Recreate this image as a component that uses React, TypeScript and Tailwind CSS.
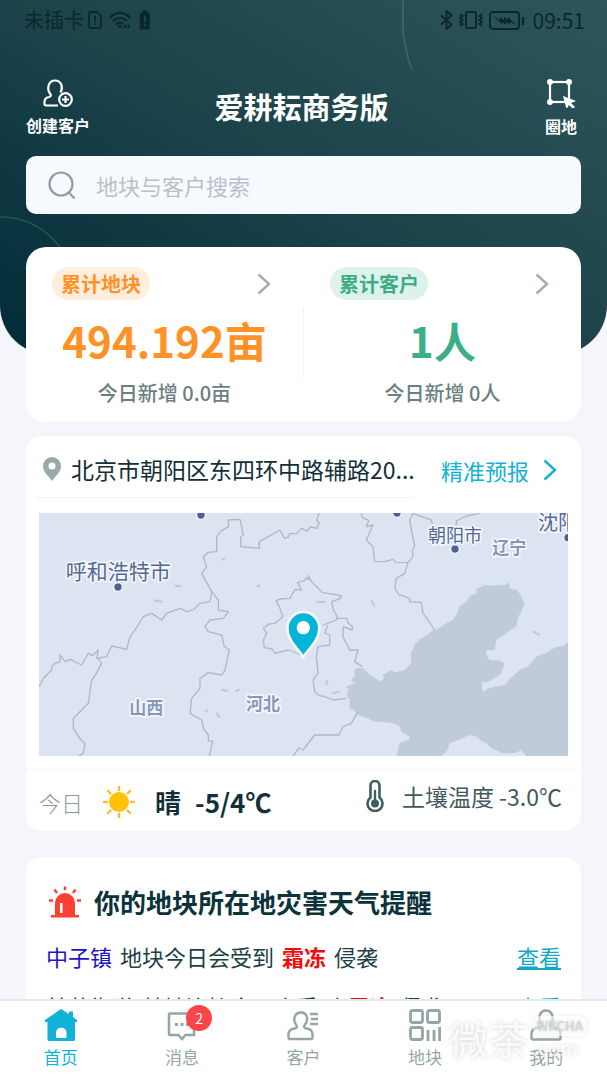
import type { ReactNode } from "react";
import clsx from "clsx";

type Stat = {
  label: string;
  value: string;
  today: string;
  pill: string;
  color: string;
};

type Alert = {
  place: string;
  text: string;
  hazard: string;
};

type Tab = {
  label: string;
  icon: ReactNode;
  active?: boolean;
  badge?: number;
};

const stats: Stat[] = [
  {
    label: "累计地块",
    value: "494.192亩",
    today: "今日新增 0.0亩",
    pill: "bg-[#ffeedd] text-[#ff9226]",
    color: "text-[#ff9226]",
  },
  {
    label: "累计客户",
    value: "1人",
    today: "今日新增 0人",
    pill: "bg-[#dcf2ea] text-[#3bae86]",
    color: "text-[#3bae86]",
  },
];

const alerts: Alert[] = [
  { place: "中子镇", text: "地块今日会受到", hazard: "霜冻" },
  { place: "林草街道", text: "林地连接今日会受到", hazard: "霜冻" },
];

const borders = [
  "0,521 14,495 38,471 38,461 50,450 63,446 63,426 78,446 93,439 128,456 148,421 160,428 178,411 173,436 203,431 218,399 263,409 273,371 288,351 313,311 338,301 368,321 383,301 423,286 443,296 463,290 483,271 513,266 518,236 488,181 503,161 493,131 508,118 533,116 533,71 545,55 568,41 568,21 603,19 613,66 605,72 605,101 661,106 661,86 723,51 736,76 748,72 752,62 773,62 788,46 803,54 815,42 833,46 841,30 833,22 841,0",
  "178,436 188,451 170,485 158,501 148,571 103,616 103,646 125,680 138,691 133,721 118,729",
  "518,236 538,261 538,291 568,296 553,316 513,321 498,341 508,356 548,366 556,400 571,411 558,471 548,486 508,479 483,496 483,526 458,556 453,601 488,621 495,650 508,666 508,682 521,686 511,729",
  "723,286 711,263 725,258 753,256 768,229 788,231 776,208 798,203 800,194 808,200 808,188 818,206 851,239 885,244 908,249 900,258 878,266 883,291 895,311 893,321 853,336",
  "723,286 731,311 708,331 690,333 673,346 683,360 673,381 676,404 700,408 708,421 748,411 788,426",
  "893,316 923,316 928,330 940,341 940,351 913,341 912,371 932,411 957,411 947,446 970,461",
  "867,336 857,360 872,366 872,396 837,401 832,431 837,481 822,501 827,536 842,548 855,550 882,561 922,556",
  "957,596 937,631 912,641 900,666 827,666 792,711 780,705 770,718 763,729",
  "967,1 970,14 990,22 982,41 1002,36 990,62 982,81 1002,101 1007,146 1040,145 1062,139 1070,148 1107,149 1122,131 1120,115 1127,96 1117,51 1112,21 1122,1",
  "1107,149 1097,181 1072,196 1067,226 1080,245 1112,256 1112,266 1147,268 1152,301 1165,318 1187,351",
  "1122,1 1140,8 1177,21 1182,41",
  "1322,1 1282,9 1252,24 1252,36",
];

const specks = [
  "549,140 556,137",
  "655,220 662,218",
  "345,262 368,266",
  "408,218 424,220",
  "835,266 858,268",
  "998,264 1006,278",
  "550,530 565,534",
  "592,534 600,530",
  "500,595 506,590",
  "534,602 540,612",
  "862,514 866,502",
  "882,540 900,536",
  "1484,356 1500,365",
];

const dots = [
  [237, 222],
  [486, 6],
  [1074, 0],
  [1248, 108],
  [1587, 74],
];

function ChevronRight({ className }: { className?: string }) {
  return (
    <svg viewBox="0 0 14 22" className={clsx("h-[22px] w-3.5 shrink-0", className)} aria-hidden>
      <path d="M1.5 1.5 12 11 1.5 20.5" fill="none" stroke="currentColor" strokeWidth="2.4" />
    </svg>
  );
}

function StatusBar() {
  return (
    <div className="flex h-10 items-center justify-between pr-[22px] pl-6 text-[#0b272e]">
      <div className="flex items-center">
        <span className="text-[20px] leading-10">未插卡</span>
        <svg viewBox="0 0 14 18" className="ml-1 h-[18px] w-3.5" aria-hidden>
          <path d="M1 3.5A2 2 0 0 1 3 1h6l4 4v10a2 2 0 0 1-2 2H3a2 2 0 0 1-2-2z" fill="none" stroke="currentColor" strokeWidth="1.8" />
          <path d="M7 5v5.5M7 12v2" stroke="currentColor" strokeWidth="2" />
        </svg>
        <svg viewBox="0 0 22 18" className="ml-[7px] h-[18px] w-[22px]" aria-hidden>
          <g fill="none" stroke="currentColor" strokeWidth="2.2">
            <path d="M1 6.5C7 .3 15 .3 21 6.5" />
            <path d="M4 10c4.3-4 9.700-4 14 0" />
            <path d="M7 13.300c2.400-2.200 5-2.200 7 0" />
          </g>
          <circle cx="11" cy="15.5" r="1.8" fill="currentColor" />
          <path d="m17 13-3 2.500 3 2.500zM18.500 13l3 2.500-3 2.500z" fill="currentColor" />
        </svg>
        <svg viewBox="0 0 12 20" className="ml-2 h-5 w-3" aria-hidden>
          <path d="M3.500.5h5V3h2.300v16.500H.7V3h2.800z" fill="currentColor" />
          <path d="M6 6v6.500M6 14.300v2" stroke="#1d4a4c" strokeWidth="1.6" />
        </svg>
      </div>
      <div className="flex items-center">
        <svg viewBox="0 0 13 20" className="h-5 w-[13px]" aria-hidden>
          <path d="m1 5.500 10.500 9L6.500 19V1l5 4.500L1 14.500" fill="none" stroke="currentColor" strokeWidth="1.9" />
        </svg>
        <svg viewBox="0 0 24 18" className="ml-1.5 h-[18px] w-6" aria-hidden>
          <g fill="none" stroke="currentColor" strokeWidth="2">
            <rect x="7" y="1" width="10" height="16" rx="1.5" />
            <path d="m1 3 2.500 2L1 7l2.500 2L1 11l2.500 2L1 15M23 3l-2.500 2L23 7l-2.500 2 2.500 2-2.500 2 2.500 2" />
          </g>
        </svg>
        <svg viewBox="0 0 36 19" className="ml-1.5 h-[19px] w-9" aria-hidden>
          <rect x="1" y="1" width="29" height="17" rx="3" fill="none" stroke="currentColor" strokeWidth="1.9" />
          <path d="M34 6v8" stroke="currentColor" strokeWidth="2.2" />
          <path d="m4 4 7.500 5.500V5.500L15 9V5.500L18.500 9V6L28 14l-7-3v3l-4-3v3l-4-3v2.500z" fill="currentColor" />
        </svg>
        <span className="ml-2 text-[21px] leading-10">09:51</span>
      </div>
    </div>
  );
}

function HeaderButton({ label, children }: { label: string; children: ReactNode }) {
  return (
    <button type="button" className="flex flex-col items-center gap-1.5 text-white">
      {children}
      <span className="text-[16px] leading-6 font-bold">{label}</span>
    </button>
  );
}

function Header() {
  return (
    <header className="relative overflow-hidden rounded-b-[50px] bg-linear-to-bl from-[#2d565b] via-[#1c434a] via-50% to-[#002b38] pb-[141px]">
      <svg viewBox="0 0 607 355" className="absolute inset-0 h-full w-full" fill="none" preserveAspectRatio="xMinYMin slice" aria-hidden>
        <circle cx="0" cy="292" r="75" stroke="#3d6870" strokeOpacity="0.6" strokeWidth="1.5" />
        <path d="M403 0v32q3 22 9 38" stroke="#4b787b" strokeOpacity="0.5" strokeWidth="2" />
      </svg>
      <div className="relative">
        <StatusBar />
        <div className="grid grid-cols-[1fr_auto_1fr] items-center pt-9 pr-[30px] pb-4 pl-[26px]">
          <div className="flex justify-start">
            <HeaderButton label="创建客户">
              <svg viewBox="0 0 30 28" className="h-7 w-[30px]" fill="none" stroke="currentColor" strokeWidth="2.2" aria-hidden>
                <path d="M15 26.500H3a1.500 1.500 0 0 1-1.500-1.500v-2c0-3 1.500-4.500 4.500-5 2-.4 2.500-1.800 1-3.500C3.500 9.500 5.500 1.500 12 1.500s8.500 7 5.500 12" />
                <circle cx="22.5" cy="20.5" r="6.3" />
                <path d="M22.500 17v7M19 20.500h7" />
              </svg>
            </HeaderButton>
          </div>
          <h1 className="pb-1 text-[29px] leading-[60px] font-bold text-white">爱耕耘商务版</h1>
          <div className="flex justify-end">
            <HeaderButton label="圈地">
              <svg viewBox="0 0 30 30" className="h-[30px] w-[30px]" aria-hidden>
                <rect x="4" y="4" width="19" height="20" fill="none" stroke="currentColor" strokeWidth="2.2" />
                <g fill="currentColor">
                  <circle cx="4" cy="4" r="3" />
                  <circle cx="23" cy="4" r="3" />
                  <circle cx="4" cy="24" r="3" />
                </g>
                <path d="m17 18 13 5-5 2 4 4-2 2-4-4-2.500 4z" fill="currentColor" />
              </svg>
            </HeaderButton>
          </div>
        </div>
        <div className="mx-[26px] flex h-[58px] items-center rounded-[10px] bg-[#f6f9fd] pl-[22px]">
          <svg viewBox="0 0 28 28" className="h-7 w-7 shrink-0 text-[#8f9fa3]" fill="none" stroke="currentColor" strokeWidth="2.2" aria-hidden>
            <circle cx="13" cy="13" r="11.5" />
            <path d="m20.500 21 6 6.500" />
          </svg>
          <input
            type="text"
            aria-label="地块与客户搜索"
            placeholder="地块与客户搜索"
            className="ml-5 min-w-0 flex-1 bg-transparent text-[22px] leading-8 outline-none placeholder:text-[#b9c1c7]"
          />
        </div>
      </div>
    </header>
  );
}

function StatColumn({ stat }: { stat: Stat }) {
  return (
    <a href="#" className="block flex-1 text-center">
      <div className="flex h-[33px] items-center justify-between pr-8 pl-[26px]">
        <span className={clsx("rounded-full px-[9px] text-[20px] leading-[33px] font-bold", stat.pill)}>{stat.label}</span>
        <ChevronRight className="text-[#a3acae]" />
      </div>
      <p className={clsx("mt-2.5 text-[42px] leading-[60px] font-bold", stat.color)}>{stat.value}</p>
      <p className="mt-2 text-[20px] leading-[30px] font-medium text-[#6a7f80]">{stat.today}</p>
    </a>
  );
}

function WeatherMap() {
  return (
    <svg
      viewBox="0 0 1587 729"
      preserveAspectRatio="xMidYMid slice"
      className="block h-[243px] w-full bg-[#dce4f1]"
      role="img"
      aria-label="地图"
    >
      <path
        d="M1192 351 1222 331 1240 322 1257 296 1262 280 1282 266 1292 250 1312 240 1312 228 1337 216 1360 218 1402 216 1408 206 1412 226 1435 232 1447 250 1456 275 1445 300 1437 311 1432 340 1407 356 1372 381 1367 411 1342 412 1342 426 1352 441 1385 443 1397 452 1387 481 1372 493 1350 505 1327 509 1332 536 1345 527 1367 521 1397 516 1410 500 1442 471 1465 462 1492 431 1520 420 1552 401 1570 400 1587 386V729H1462L1447 711 1430 720 1392 721 1357 706 1345 692 1322 681 1315 672 1292 666 1260 680 1232 691 1225 712 1207 729H1072L1082 691 1095 685 1112 681 1110 670 1087 656 1080 638 1062 631 1047 628 1007 626 985 615 957 606 945 592 932 586 932 560 922 546 930 530 920 521 947 511 935 500 947 491 947 471 957 464 972 466 990 483 1002 491 1027 506 1035 495 1030 485 1042 481 1055 472 1070 478 1097 471 1117 450 1115 420 1127 396 1140 380 1165 365 1182 351Z"
        fill="#bfcbd9"
      />
      <g fill="none" stroke="#b0b8c7" strokeWidth="4" strokeLinejoin="round">
        {borders.map((points) => (
          <polyline key={points} points={points} />
        ))}
      </g>
      <g fill="none" stroke="#bfc8d6" strokeWidth="6" strokeLinecap="round">
        {specks.map((points) => (
          <polyline key={points} points={points} />
        ))}
      </g>
      <g fill="#4d6193" stroke="#f3f7fc" strokeWidth="4">
        {dots.map(([x, y]) => (
          <circle key={x} cx={x} cy={y} r="13" />
        ))}
      </g>
      <g fill="#556895" stroke="#f3f7fc" strokeWidth="10" strokeLinejoin="round" paintOrder="stroke">
        <text x="238" y="198" fontSize="63" textAnchor="middle">
          呼和浩特市
        </text>
        <text x="1248" y="87" fontSize="54" textAnchor="middle">
          朝阳市
        </text>
        <text x="1497" y="50" fontSize="60">
          沈阳
        </text>
        <g fill="#8797ba" fontSize="51" fontWeight="700" textAnchor="middle">
          <text x="1411" y="123">辽宁</text>
          <text x="322" y="603">山西</text>
          <text x="672" y="591">河北</text>
        </g>
      </g>
      <path
        d="M793 432C775 405 745 382 745 345a48 48 0 0 1 96 0c0 37-30 60-48 87z"
        fill="#06b4d8"
        stroke="#f3f9fd"
        strokeWidth="8"
      />
      <circle cx="793" cy="344" r="20" fill="#fff" />
    </svg>
  );
}

function WeatherCard() {
  return (
    <section className="mx-[26px] mt-3.5 rounded-2xl bg-white">
      <div className="flex">
        <div className="ml-2.5 flex h-[62px] min-w-0 flex-1 items-center gap-2.5 border-b border-[#f1f2f5] pt-1 pl-[7px]">
          <svg viewBox="0 0 18 24" className="h-6 w-[18px] shrink-0" aria-hidden>
            <path d="M9 0a9 9 0 0 0-9 9c0 6.500 5 9 9 15 4-6 9-8.500 9-15a9 9 0 0 0-9-9zm0 5.500a3.500 3.500 0 1 1 0 7 3.500 3.500 0 0 1 0-7z" fill="#9aa9ac" />
          </svg>
          <p className="text-[23px] leading-8 whitespace-nowrap text-[#12303a]">北京市朝阳区东四环中路辅路20...</p>
        </div>
        <a href="#" className="flex items-center gap-3.5 pt-1.5 pr-6 pl-[27px] text-[22px] leading-8 text-[#12b2d2]">
          精准预报
          <ChevronRight />
        </a>
      </div>
      <div className="mt-[15px] px-[13px]">
        <WeatherMap />
      </div>
      <div className="mt-[13px] flex h-[62px] items-center justify-between border-t border-[#f4f5f8] pr-[19px] pl-[13px]">
        <div className="flex items-center pt-0.5">
          <span className="text-[22px] leading-8 font-light text-[#8d9798]">今日</span>
          <svg viewBox="0 0 32 32" className="ml-5 h-8 w-8" aria-hidden>
            <circle cx="16" cy="16" r="10" fill="#ffc107" />
            <path
              d="M16 1v3M16 28v3M1 16h3M28 16h3M5 5l2.500 2.500M24.500 24.500 27 27M5 27l2.500-2.500M24.500 7.500 27 5"
              stroke="#f9bd2a"
              strokeWidth="2.4"
              strokeLinecap="round"
            />
          </svg>
          <strong className="ml-5 text-[26px] leading-8 font-bold text-[#12303a]">晴</strong>
          <strong className="ml-3.5 text-[26px] leading-8 font-bold text-[#12303a]">-5/4℃</strong>
        </div>
        <div className="flex items-center pb-2.5">
          <svg viewBox="0 0 18 32" className="h-8 w-[18px]" aria-hidden>
            <path
              d="M4.500 17.500V5.500a4.500 4.500 0 0 1 9 0v12a7.500 7.500 0 1 1-9 0z"
              fill="none"
              stroke="#3d5e62"
              strokeWidth="2.6"
            />
            <path d="M9 11v10" stroke="#3d5e62" strokeWidth="2.4" strokeLinecap="round" />
            <circle cx="9" cy="23.5" r="4" fill="#3d5e62" />
          </svg>
          <span className="ml-[18px] text-[23px] leading-8 text-[#42595d]">土壤温度 -3.0℃</span>
        </div>
      </div>
    </section>
  );
}

function AlertCard() {
  return (
    <section className="mx-[26px] mt-[26px] rounded-2xl bg-white px-5 pt-[25px] pb-6">
      <h2 className="flex items-center gap-[13px] pl-[3px] text-[26px] leading-10 font-bold text-[#0c333b]">
        <svg viewBox="0 0 32 32" className="h-8 w-8" aria-hidden>
          <path
            d="M16 .5V4M5.500 3.500 8 7M26.500 3.500 24 7M0 14.500h4M28 14.500h4"
            stroke="#fb4034"
            strokeWidth="2.4"
          />
          <path d="M6 29V17a10 10 0 0 1 20 0v12h4v2.500H2V29zM11 17v10h2.500V17z" fill="#fb4034" fillRule="evenodd" />
        </svg>
        你的地块所在地灾害天气提醒
      </h2>
      <ul className="mt-[9px] text-[22px] leading-[50px] text-[#1d3f45]">
        {alerts.map((alert) => (
          <li key={alert.place} className="flex justify-between">
            <p className="flex gap-2">
              <span className="text-[#1f14c4]">{alert.place}</span>
              <span>{alert.text}</span>
              <strong className="font-bold text-[#f20d0d]">{alert.hazard}</strong>
              <span>侵袭</span>
            </p>
            <a href="#" className="text-[#12a8c8] underline">
              查看
            </a>
          </li>
        ))}
      </ul>
    </section>
  );
}

const tabs: Tab[] = [
  {
    label: "首页",
    active: true,
    icon: (
      <path
        d="M16 0 24 5V2.500h4V8l4 3v2h-2v17.500a1.500 1.500 0 0 1-1.500 1.500H4a1.500 1.500 0 0 1-1.500-1.500V13H0v-2zM11 29h10.500v-5c0-7-10.500-7-10.500 0z"
        fill="currentColor"
        fillRule="evenodd"
      />
    ),
  },
  {
    label: "消息",
    badge: 2,
    icon: (
      <>
        <path d="M4 4.500h23a1 1 0 0 1 1 1V26H19.500L16 30l-3.500-4H4a1 1 0 0 1-1-1V5.500a1 1 0 0 1 1-1z" fill="none" stroke="currentColor" strokeWidth="2.5" />
        <path d="M9 15.500h3M14.500 15.500h3M20 15.500h3" stroke="currentColor" strokeWidth="3" />
      </>
    ),
  },
  {
    label: "客户",
    icon: (
      <path
        d="M14 3.500c-7 0-8.500 8-4.500 13 1 1.500 0 2.700-2 3-3.500.5-6 2.500-6 6v3c0 1 .5 1.500 1.500 1.500h21c1 0 1.500-.5 1.500-1.500v-3c0-3.500-2.500-5.500-6-6-2-.3-3-1.500-2-3 4-5 3.500-13-3.500-13zM23 5h8M24 10h7M23 15h8"
        fill="none"
        stroke="currentColor"
        strokeWidth="2.4"
      />
    ),
  },
  {
    label: "地块",
    icon: (
      <g fill="none" stroke="currentColor" strokeWidth="2.8">
        <rect x="1.5" y="1.5" width="12" height="12" rx="2" />
        <rect x="18.5" y="1.5" width="12" height="12" rx="2" />
        <rect x="1.5" y="18.5" width="12" height="12" rx="2" />
        <path d="M19 21v11M25 21v11M30.600 18v14" />
      </g>
    ),
  },
  {
    label: "我的",
    icon: (
      <path
        d="M16 1.500c-6.500 0-8.500 8-4.500 13.500 1.200 1.800 0 3-2.500 3.500C4 19 1.500 21.500 1.500 25v4c0 1 .5 1.500 1.500 1.500h26c1 0 1.500-.5 1.500-1.500v-4c0-3.500-2.500-6-7.500-6.500-2.500-.5-3.700-1.700-2.500-3.500 4-5.500 2-13.500-4.500-13.500z"
        fill="none"
        stroke="currentColor"
        strokeWidth="2.4"
      />
    ),
  },
];

function TabBar() {
  return (
    <nav className="relative grid h-[81px] shrink-0 grid-cols-5 border-t-2 border-[#e2eaea] bg-white">
      {tabs.map((tab) => (
        <a
          key={tab.label}
          href="#"
          className={clsx("flex flex-col items-center pt-2", tab.active ? "text-[#12b2d8]" : "text-[#96a5a6]")}
        >
          <span className="relative">
            <svg viewBox="0 0 32 32" className="h-8 w-8" aria-hidden>
              {tab.icon}
            </svg>
            {tab.badge && (
              <span className="absolute -top-1 left-5 h-[26px] w-[26px] rounded-full bg-[#fb4548] text-center text-[14px] leading-[26px] text-white">
                {tab.badge}
              </span>
            )}
          </span>
          <span className="mt-1 text-[17px] leading-6">{tab.label}</span>
        </a>
      ))}
      <div className="pointer-events-none absolute right-5 bottom-[18px] flex h-12 items-center text-white/80 text-shadow-[0_0_4px_rgb(0_0_0/0.18)]">
        <span className="text-[40px] leading-[48px]">微茶</span>
        <span className="ml-1 flex flex-col">
          <span className="rounded-lg bg-white/60 px-1 text-[13px] leading-5 font-bold text-[#d3d8d9] shadow-[0_0_4px_rgb(0_0_0/0.1)]">WXCHA</span>
          <span className="text-[20px] leading-6">.com</span>
        </span>
      </div>
    </nav>
  );
}

export default function App() {
  return (
    <div className="flex h-screen flex-col bg-[#f5f5fb] font-['Noto_Sans_CJK_SC',sans-serif]" lang="zh-CN">
      <main className="min-h-0 flex-1 overflow-y-auto [scrollbar-width:none]">
        <Header />
        <section className="relative mx-[26px] -mt-[108px] flex rounded-[20px] bg-white pt-5 pb-3.5">
          <StatColumn stat={stats[0]} />
          <div className="mt-10 h-[70px] w-px bg-[#f1f2f5]" />
          <StatColumn stat={stats[1]} />
        </section>
        <WeatherCard />
        <AlertCard />
      </main>
      <TabBar />
    </div>
  );
}
